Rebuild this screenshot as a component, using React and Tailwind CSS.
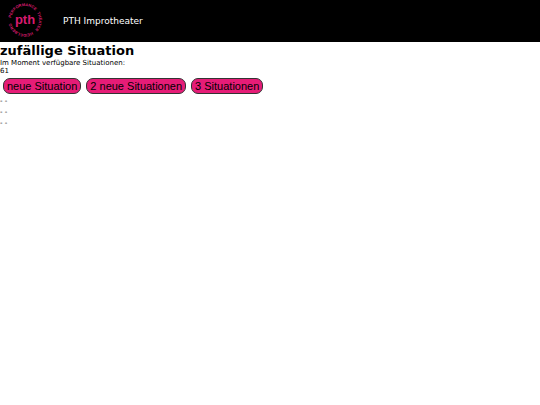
import React from 'react';

const situations = ['- -', '- -', '- -'];
const actions = ['neue Situation', '2 neue Situationen', '3 Situationen'];

// words on the ring, with their start along the circle (clockwise from the left)
const ringWords = [
  { word: 'PERFORMANCE', start: 2 },
  { word: 'THEATER', start: 36 },
  { word: 'HEIDELBERG', start: 58 },
];

const Logo = () => (
  <svg
    viewBox="0 1 36 36"
    className="h-9 w-9 font-['Liberation_Sans',sans-serif] font-bold"
    fill="#d81b6f"
    role="img"
    aria-label="PTH"
  >
    <defs>
      <path id="ring" d="M4 18 A14 14 0 0 1 32 18 A14 14 0 0 1 4 18" />
    </defs>
    {ringWords.map(({ word, start }) => (
      <text key={word} fontSize="4">
        <textPath href="#ring" startOffset={start}>{word}</textPath>
      </text>
    ))}
    <text x="18" y="22" textAnchor="middle" fontSize="13">pth</text>
  </svg>
);

const App = () => {
  return (
    <div className="bg-white text-black text-[7px] leading-[8px] font-['DejaVu_Sans',sans-serif]">
      <header className="flex h-[42px] items-center gap-5 bg-black px-[7px] text-white">
        <Logo />
        <span className="text-[9px] leading-3">PTH Improtheater</span>
      </header>
      <main>
        <h1 className="pt-px text-[13px] leading-4 font-bold">zufällige Situation</h1>
        <p>Im Moment verfügbare Situationen:</p>
        <p>61</p>
        <div className="flex gap-[5px] p-[3px]">
          {actions.map((label) => (
            <button
              key={label}
              type="button"
              className="h-4 rounded-[7px] border border-[#333] bg-[#e61c77] px-[3px] font-['Liberation_Sans',sans-serif] text-[11px] leading-3"
            >
              {label}
            </button>
          ))}
        </div>
        {situations.map((text, i) => (
          <p key={i} className="mb-[3px]">{text}</p>
        ))}
      </main>
    </div>
  );
};

export default App;
